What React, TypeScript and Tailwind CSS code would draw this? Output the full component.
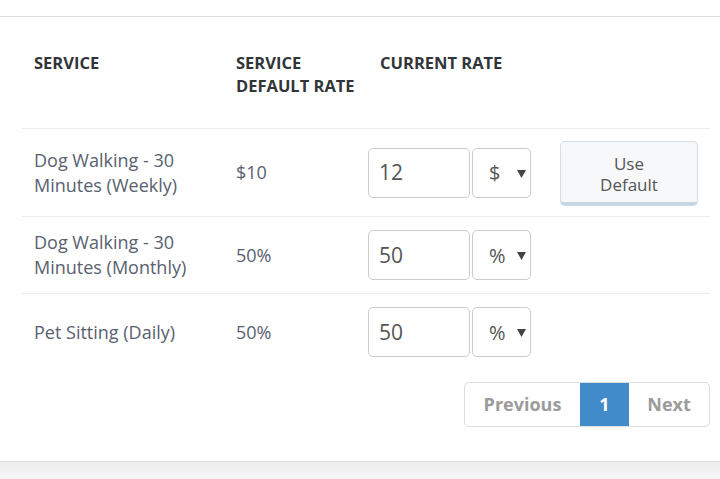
const rows = [
  { service: 'Dog Walking - 30 Minutes (Weekly)', defaultRate: '$10', current: '12', unit: '$', showDefault: true, h: 'h-[88px] border-b' },
  { service: 'Dog Walking - 30 Minutes (Monthly)', defaultRate: '50%', current: '50', unit: '%', showDefault: false, h: 'h-[77px] border-b' },
  { service: 'Pet Sitting (Daily)', defaultRate: '50%', current: '50', unit: '%', showDefault: false, h: 'h-[76px]' },
]

function UnitSelect({ unit }: { unit: string }) {
  return (
    <div className="relative flex h-[50px] w-[59px] items-center rounded-[5px] border border-[#cccccc] bg-white pl-[16px] text-[20px] text-[#555555]">
      {unit}
      <svg className="absolute right-[4px] top-[21px]" width="9" height="8" viewBox="0 0 9 8">
        <path d="M0 0h9L4.5 8z" fill="#444444" />
      </svg>
    </div>
  )
}

export default function App() {
  return (
    <div className="min-h-[479px] bg-white font-['Open_Sans',sans-serif]">
      <div className="h-[16px] bg-white" />
      <div className="border-y border-[#dcdcdc] bg-white pb-[34px] pl-[22px] pr-[10px]">
        <div className="grid h-[112px] grid-cols-[202px_144px_1fr] border-b border-[#e9eef3] pt-[34px] text-[16.5px] font-bold uppercase leading-[23px] text-[#31353a]">
          <div className="pl-[12px]">Service</div>
          <div className="pl-[12px]">
            Service
            <br />
            Default Rate
          </div>
          <div className="pl-[12px]">Current Rate</div>
        </div>

        {rows.map((row) => (
          <div
            key={row.service}
            className={`grid grid-cols-[202px_144px_1fr] items-center border-[#e9eef3] text-[18px] leading-[25px] text-[#58616f] ${row.h}`}
          >
            <div className="pl-[12px] pr-[20px]">{row.service}</div>
            <div className="pl-[12px]">{row.defaultRate}</div>
            <div className="flex items-center">
              <div className="flex h-[50px] w-[102px] items-center rounded-[5px] border border-[#cccccc] bg-white pl-[10px] text-[21px] text-[#555555]">
                {row.current}
              </div>
              <div className="ml-[2px]">
                <UnitSelect unit={row.unit} />
              </div>
              {row.showDefault && (
                <button className="ml-[29px] mt-[2px] h-[65px] w-[138px] rounded-[5px] border border-b-[4px] border-[#d6dfe8] border-b-[#c9d6e3] bg-[#f6f8fa] pt-[4px] text-[17px] leading-[21px] text-[#555555]">
                  Use
                  <br />
                  Default
                </button>
              )}
            </div>
          </div>
        ))}

        <div className="mt-[12px] flex justify-end">
          <div className="flex h-[45px] overflow-hidden rounded-[5px] border border-[#dddddd] text-[18px] font-bold text-[#9b9b9b]">
            <div className="flex w-[115px] items-center justify-center">Previous</div>
            <div className="flex w-[49px] items-center justify-center bg-[#428bca] text-white">1</div>
            <div className="flex w-[80px] items-center justify-center">Next</div>
          </div>
        </div>
      </div>
      <div className="h-[18px] bg-gradient-to-b from-[#ececec] to-[#f8f8f8]" />
    </div>
  )
}
